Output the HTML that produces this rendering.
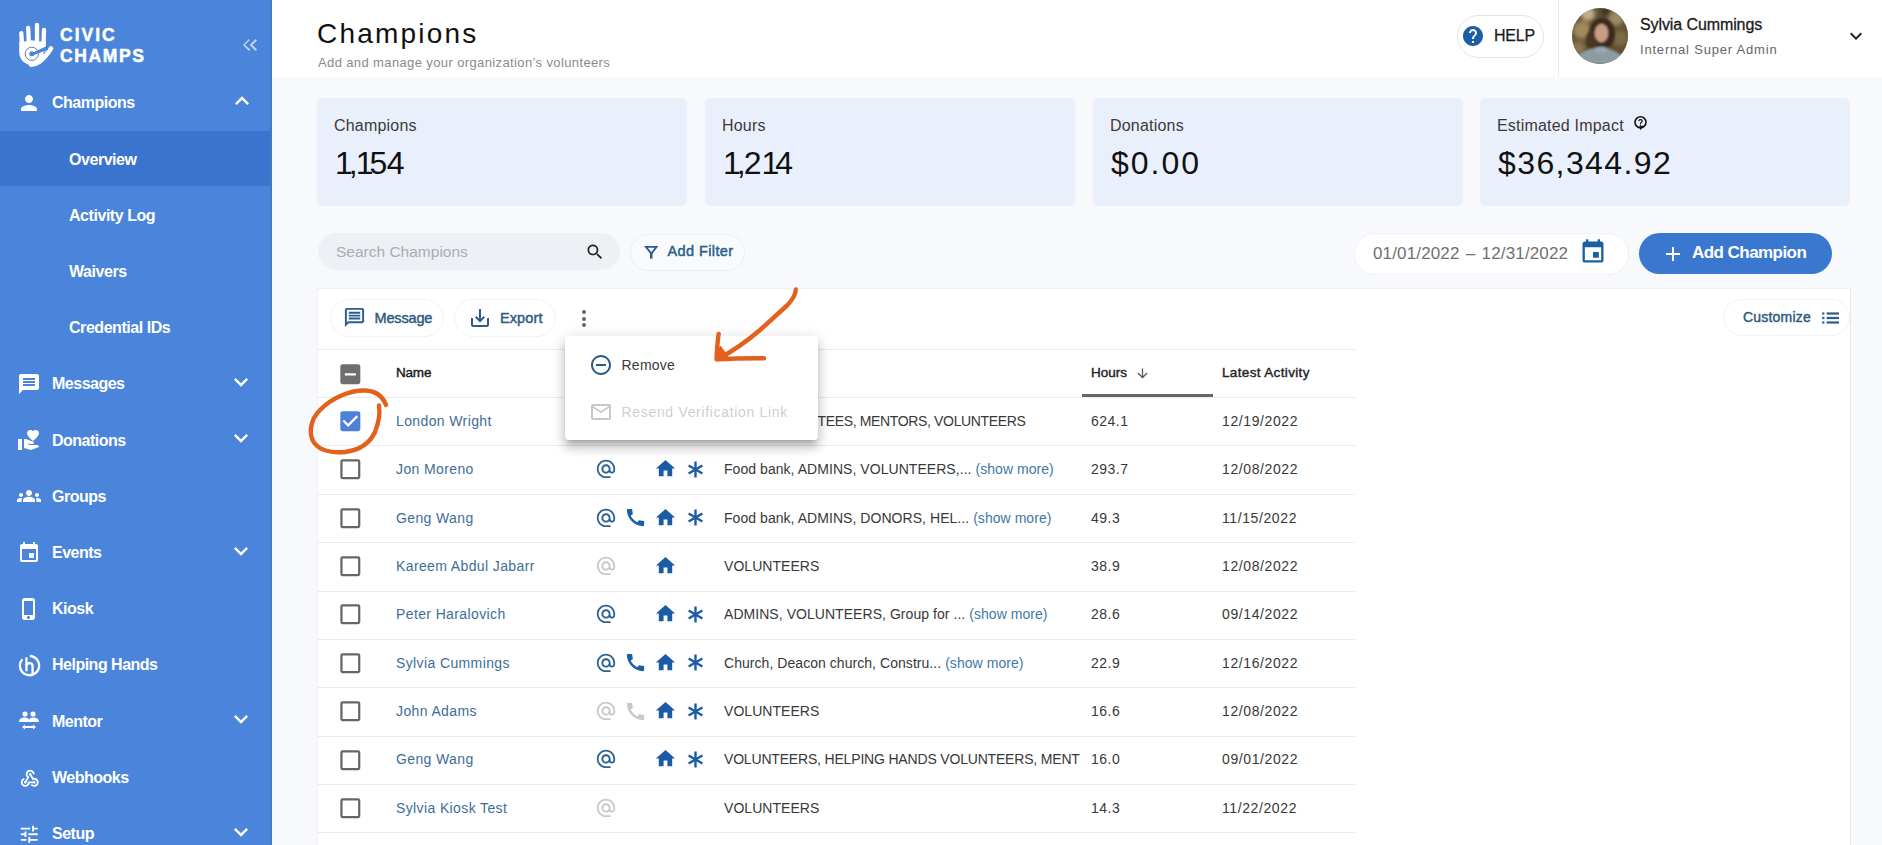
<!DOCTYPE html>
<html><head><meta charset="utf-8"><title>Champions</title><style>
*{margin:0;padding:0;box-sizing:border-box}
html,body{width:1882px;height:845px;overflow:hidden;background:#F7F9FC;font-family:"Liberation Sans", sans-serif}
.t{position:absolute;white-space:nowrap;line-height:1}
.ic{position:absolute;display:block}
.bx{position:absolute}
</style></head>
<body>
<div class="bx" style="left:0;top:0;width:272px;height:845px;background:#4A85DB"></div>
<div class="bx" style="left:270px;top:0;width:2px;height:845px;background:#4478C4"></div>
<div class="bx" style="left:0;top:131px;width:270px;height:55px;background:#3A74CE"></div>
<svg class="ic" style="left:0;top:0;width:60px;height:70px" viewBox="0 0 60 70">
<g fill="none" stroke="#fff" stroke-linecap="round">
<path d="M21.3 33.2 L22.3 50" stroke-width="4.3"/>
<path d="M28.2 27.8 L28.9 44" stroke-width="4.3"/>
<path d="M37 25 L37 43" stroke-width="4.3"/>
<path d="M44 30 L43.5 45" stroke-width="4.3"/>
<path d="M51 48.5 Q45 58 39 62 Q35 64.6 31 64.6" stroke-width="4.6"/>
</g>
<g fill="#fff"><rect x="19.3" y="41.5" width="26.5" height="10"/><ellipse cx="31.5" cy="52.5" rx="12.2" ry="12.3"/></g>
<circle cx="31.8" cy="53.8" r="6.6" fill="none" stroke="#2F5FA8" stroke-width="0.8"/>
<path d="M33.2 52.4 L46.3 46.2 L48.6 49.6 L33.2 55.3 Z" fill="#4A85DB"/>
<circle cx="31.8" cy="53.8" r="2.5" fill="#4A85DB"/>
</svg>
<div class="t" style="left:60px;top:26.99px;font-size:17.5px;color:#fff;font-weight:700;letter-spacing:2.0px;-webkit-text-stroke:0.5px #fff">CIVIC</div>
<div class="t" style="left:60px;top:47.99px;font-size:17.5px;color:#fff;font-weight:700;letter-spacing:1.6px;-webkit-text-stroke:0.5px #fff">CHAMPS</div>
<svg class="ic" style="left:238px;top:33px;width:24px;height:24px;" viewBox="0 0 24 24"><path fill="#C2D5F3" d="M17.59 18L19 16.59 14.42 12 19 7.41 17.59 6l-6 6z M11 18l1.41-1.41L6.83 12l4.58-4.59L11 6l-6 6z"/></svg>
<div class="t" style="left:52px;top:95.46px;font-size:16px;color:#fff;font-weight:700;letter-spacing:-0.5px;">Champions</div>
<svg class="ic" style="left:17px;top:91.0px;width:24px;height:24px;" viewBox="0 0 24 24"><path fill="#fff" d="M12 12c2.21 0 4-1.79 4-4s-1.79-4-4-4-4 1.79-4 4 1.79 4 4 4zm0 2c-2.67 0-8 1.34-8 4v2h16v-2c0-2.66-5.33-4-8-4z"/></svg>
<svg class="ic" style="left:227.5px;top:86.64999999999999px;width:28px;height:28px;" viewBox="0 0 24 24"><path fill="#fff" d="M12 8l-6 6 1.41 1.41L12 10.83l4.59 4.58L18 14z"/></svg>
<div class="t" style="left:69px;top:151.66px;font-size:16px;color:#fff;font-weight:700;letter-spacing:-0.45px;">Overview</div>
<div class="t" style="left:69px;top:207.86px;font-size:16px;color:#fff;font-weight:700;letter-spacing:-0.45px;">Activity Log</div>
<div class="t" style="left:69px;top:264.06px;font-size:16px;color:#fff;font-weight:700;letter-spacing:-0.45px;">Waivers</div>
<div class="t" style="left:69px;top:320.26px;font-size:16px;color:#fff;font-weight:700;letter-spacing:-0.45px;">Credential IDs</div>
<div class="t" style="left:52px;top:376.46px;font-size:16px;color:#fff;font-weight:700;letter-spacing:-0.5px;">Messages</div>
<svg class="ic" style="left:17px;top:372.0px;width:24px;height:24px;" viewBox="0 0 24 24"><path fill="#fff" d="M20 2H4c-1.1 0-1.99.9-1.99 2L2 22l4-4h14c1.1 0 2-.9 2-2V4c0-1.1-.9-2-2-2zM18 14H6v-2h12v2zm0-3H6V9h12v2zm0-3H6V6h12v2z"/></svg>
<svg class="ic" style="left:227.3px;top:368.25px;width:28px;height:28px;" viewBox="0 0 24 24"><path fill="#fff" d="M16.59 8.59L12 13.17 7.41 8.59 6 10l6 6 6-6z"/></svg>
<div class="t" style="left:52px;top:432.66px;font-size:16px;color:#fff;font-weight:700;letter-spacing:-0.5px;">Donations</div>
<svg class="ic" style="left:17px;top:428.20000000000005px;width:24px;height:24px;" viewBox="0 0 24 24"><path fill="#fff" d="M1 11h4v11H1zm15-7.75C16.65 2.49 17.66 2 18.7 2 20.55 2 22 3.45 22 5.3c0 2.27-2.91 4.9-6 7.7-3.09-2.81-6-5.44-6-7.7C10 3.45 11.45 2 13.3 2c1.04 0 2.05.49 2.7 1.25zM20 17h-7l-2.09-.73.33-.94L13 16h2.82c.65 0 1.18-.53 1.18-1.18 0-.49-.31-.93-.77-1.11L8.97 11H7v9.02L14 22l8-3c-.01-1.1-.89-2-2-2z"/></svg>
<svg class="ic" style="left:227.3px;top:424.45000000000005px;width:28px;height:28px;" viewBox="0 0 24 24"><path fill="#fff" d="M16.59 8.59L12 13.17 7.41 8.59 6 10l6 6 6-6z"/></svg>
<div class="t" style="left:52px;top:488.86px;font-size:16px;color:#fff;font-weight:700;letter-spacing:-0.5px;">Groups</div>
<svg class="ic" style="left:17px;top:484.40000000000003px;width:24px;height:24px;" viewBox="0 0 24 24"><path fill="#fff" d="M12 12.75c1.63 0 3.07.39 4.24.9 1.08.48 1.76 1.56 1.76 2.73V18H6v-1.61c0-1.18.68-2.26 1.76-2.73 1.17-.52 2.61-.91 4.24-.91zM4 13c1.1 0 2-.9 2-2s-.9-2-2-2-2 .9-2 2 .9 2 2 2zm1.13 1.1c-.37-.06-.74-.1-1.13-.1-.99 0-1.93.21-2.78.58C.48 14.9 0 15.62 0 16.430V18h4.5v-1.61c0-.83.23-1.610.63-2.29zM20 13c1.1 0 2-.9 2-2s-.9-2-2-2-2 .9-2 2 .9 2 2 2zm4 3.43c0-.81-.48-1.53-1.22-1.85-.85-.37-1.79-.58-2.78-.58-.39 0-.76.04-1.13.1.4.68.63 1.46.63 2.29V18H24v-1.57zM12 6c1.66 0 3 1.34 3 3s-1.34 3-3 3-3-1.34-3-3 1.34-3 3-3z"/></svg>
<div class="t" style="left:52px;top:545.06px;font-size:16px;color:#fff;font-weight:700;letter-spacing:-0.5px;">Events</div>
<svg class="ic" style="left:17px;top:540.6px;width:24px;height:24px;" viewBox="0 0 24 24"><path fill="#fff" d="M17 12h-5v5h5v-5zM16 1v2H8V1H6v2H5c-1.11 0-1.99.9-1.99 2L3 19c0 1.1.89 2 2 2h14c1.1 0 2-.9 2-2V5c0-1.1-.9-2-2-2h-1V1h-2zm3 18H5V8h14v11z"/></svg>
<svg class="ic" style="left:227.3px;top:536.85px;width:28px;height:28px;" viewBox="0 0 24 24"><path fill="#fff" d="M16.59 8.59L12 13.17 7.41 8.59 6 10l6 6 6-6z"/></svg>
<div class="t" style="left:52px;top:601.26px;font-size:16px;color:#fff;font-weight:700;letter-spacing:-0.5px;">Kiosk</div>
<svg class="ic" style="left:17px;top:596.8px;width:24px;height:24px;" viewBox="0 0 24 24"><path fill="#fff" d="M15.5 1h-8C6.12 1 5 2.12 5 3.5v17C5 21.88 6.12 23 7.5 23h8c1.38 0 2.5-1.12 2.5-2.5v-17C18 2.12 16.88 1 15.5 1zm-4 21c-.83 0-1.5-.67-1.5-1.5s.67-1.5 1.5-1.5 1.5.67 1.5 1.5-.67 1.5-1.5 1.5zm4.5-4H7V4h9v14z"/></svg>
<div class="t" style="left:52px;top:657.46px;font-size:16px;color:#fff;font-weight:700;letter-spacing:-0.5px;">Helping Hands</div>
<svg class="ic" style="left:17.5px;top:653.5px;width:23px;height:23px" viewBox="0 0 24 24"><g fill="none" stroke="#fff" stroke-width="2.4" stroke-linecap="butt"><path d="M12.3 2.1 A10 10 0 1 1 4.6 5.4"/><path d="M8.8 3.5 V18"/><path d="M8.8 12.5 C8.8 8.6 15.2 8.6 15.2 12.5 V21.2"/></g></svg>
<div class="t" style="left:52px;top:713.66px;font-size:16px;color:#fff;font-weight:700;letter-spacing:-0.5px;">Mentor</div>
<svg class="ic" style="left:17px;top:709.2px;width:24px;height:24px" viewBox="0 0 24 24"><g fill="#fff"><circle cx="8" cy="5" r="2.6"/><circle cx="16" cy="5" r="2.6"/><path d="M2 13 C2 9 6 8.5 8 8.5 C10 8.5 12 9.5 12 11 C12 9.5 14 8.5 16 8.5 C18 8.5 22 9 22 13 Z"/><path d="M5 18 L8 15.5 V17 H16 V15.5 L19 18 L16 20.5 V19 H8 V20.5 Z"/></g></svg>
<svg class="ic" style="left:227.3px;top:705.45px;width:28px;height:28px;" viewBox="0 0 24 24"><path fill="#fff" d="M16.59 8.59L12 13.17 7.41 8.59 6 10l6 6 6-6z"/></svg>
<div class="t" style="left:52px;top:769.86px;font-size:16px;color:#fff;font-weight:700;letter-spacing:-0.5px;">Webhooks</div>
<svg class="ic" style="left:18.5px;top:767.9000000000001px;width:21.5px;height:21.5px;" viewBox="0 0 24 24"><path fill="#fff" d="M10 15h5.88c.27-.31.67-.5 1.12-.5.83 0 1.5.67 1.5 1.5s-.67 1.5-1.5 1.5c-.44 0-.84-.19-1.120-.5H11.9c-.46 2.28-2.48 4-4.9 4-2.76 0-5-2.24-5-5 0-2.42 1.72-4.44 4-4.9v2.07c-1.16.41-2 1.53-2 2.830 0 1.65 1.35 3 3 3s3-1.35 3-3v-1zm2.5-11c1.65 0 3 1.35 3 3h2c0-2.76-2.24-5-5-5s-5 2.24-5 5c0 1.43.6 2.71 1.55 3.62l-2.35 3.9c-.68.14-1.2.75-1.2 1.48 0 .83.67 1.5 1.5 1.5s1.5-.67 1.5-1.5c0-.16-.02-.31-.07-.45l3.38-5.63C10.49 9.61 9.5 8.42 9.5 7c0-1.65 1.35-3 3-3zm4.5 9c-.64 0-1.23.2-1.72.54l-3.05-5.07C11.53 8.35 11 7.74 11 7c0-.83.67-1.5 1.5-1.5S14 6.17 14 7c0 .15-.02.29-.06.43l2.19 3.65c.28-.05.57-.08.87-.08 2.76 0 5 2.24 5 5s-2.24 5-5 5c-1.85 0-3.47-1.01-4.33-2.5h2.67c.48.32 1.05.5 1.66.5 1.65 0 3-1.35 3-3s-1.35-3-3-3z"/></svg>
<div class="t" style="left:52px;top:826.06px;font-size:16px;color:#fff;font-weight:700;letter-spacing:-0.5px;">Setup</div>
<svg class="ic" style="left:18px;top:822.8000000000001px;width:22.5px;height:22.5px;" viewBox="0 0 24 24"><path fill="#fff" d="M3 17v2h6v-2H3zM3 5v2h10V5H3zm10 16v-2h8v-2h-8v-2h-2v6h2zM7 9v2H3v2h4v2h2V9H7zm14 4v-2H11v2h10zm-6-4h2V7h4V5h-4V3h-2v6z"/></svg>
<svg class="ic" style="left:227.3px;top:817.85px;width:28px;height:28px;" viewBox="0 0 24 24"><path fill="#fff" d="M16.59 8.59L12 13.17 7.41 8.59 6 10l6 6 6-6z"/></svg>
<div class="bx" style="left:272px;top:0;width:1610px;height:77px;background:#fff"></div>
<div class="t" style="left:317px;top:19.80px;font-size:28px;color:#111;font-weight:400;letter-spacing:2.2px;">Champions</div>
<div class="t" style="left:318px;top:56.00px;font-size:13px;color:#8A8A8A;font-weight:400;letter-spacing:0.38px;">Add and manage your organization&rsquo;s volunteers</div>
<div class="bx" style="left:1457px;top:15px;width:87px;height:43px;border:1px solid #E3E3E3;border-radius:22px;background:#fff"></div>
<svg class="ic" style="left:1461px;top:24px;width:24px;height:24px;" viewBox="0 0 24 24"><path fill="#1B5FA5" d="M12 2C6.48 2 2 6.48 2 12s4.48 10 10 10 10-4.48 10-10S17.52 2 12 2zm1 17h-2v-2h2v2zm2.07-7.75l-.9.92C13.45 12.9 13 13.5 13 15h-2v-.5c0-1.1.45-2.1 1.17-2.83l1.24-1.26c.37-.36.59-.86.59-1.41 0-1.1-.9-2-2-2s-2 .9-2 2H8c0-2.21 1.79-4 4-4s4 1.79 4 4c0 .88-.36 1.68-.93 2.25z"/></svg>
<div class="t" style="left:1494px;top:27.66px;font-size:16px;color:#1a1a1a;font-weight:400;letter-spacing:-0.2px;-webkit-text-stroke:0.25px #1a1a1a">HELP</div>
<div class="bx" style="left:1558px;top:0;width:1px;height:77px;background:#EDEDED"></div>
<svg class="ic" style="left:1572px;top:8px;width:56px;height:56px" viewBox="0 0 56 56">
<defs><clipPath id="cp"><circle cx="28" cy="28" r="28"/></clipPath>
<filter id="bl" x="-20%" y="-20%" width="140%" height="140%"><feGaussianBlur stdDeviation="2.2"/></filter>
<filter id="bl2"><feGaussianBlur stdDeviation="0.8"/></filter></defs>
<g clip-path="url(#cp)">
<rect width="56" height="56" fill="#5f5034"/>
<g filter="url(#bl)">
<circle cx="10" cy="22" r="9" fill="#a08a5c"/>
<circle cx="16" cy="6" r="7" fill="#c2b08a"/>
<circle cx="44" cy="10" r="8" fill="#9c8a62"/>
<circle cx="48" cy="30" r="8" fill="#7d6a44"/>
<circle cx="6" cy="40" r="7" fill="#8a7650"/>
<circle cx="34" cy="4" r="5" fill="#3f3524"/>
</g>
<g filter="url(#bl2)">
<ellipse cx="30" cy="26" rx="13" ry="16" fill="#3a2a1c"/>
<ellipse cx="20" cy="32" rx="6" ry="10" fill="#4a3624"/>
<ellipse cx="29.5" cy="25" rx="6.8" ry="9.2" fill="#c79d84"/>
<path d="M0 56 C4 46 14 40 28 40 C42 40 50 46 56 56 Z" fill="#8c9ba4"/>
<path d="M22 41 C25 38 33 38 36 41 L34 45 L24 45 Z" fill="#9aa8b0"/>
</g>
</g></svg>
<div class="t" style="left:1640px;top:16.96px;font-size:16px;color:#1a1a1a;font-weight:400;letter-spacing:-0.1px;-webkit-text-stroke:0.3px #1a1a1a">Sylvia Cummings</div>
<div class="t" style="left:1640px;top:42.50px;font-size:13px;color:#666;font-weight:400;letter-spacing:0.8px;">Internal Super Admin</div>
<svg class="ic" style="left:1844px;top:24px;width:24px;height:24px;" viewBox="0 0 24 24"><path fill="#222" d="M16.59 8.59L12 13.17 7.41 8.59 6 10l6 6 6-6z"/></svg>
<div class="bx" style="left:317px;top:98px;width:370px;height:108px;background:#EAF0FB;border-radius:5px"></div>
<div class="t" style="left:334px;top:117.96px;font-size:16px;color:#3a3a3a;font-weight:400;letter-spacing:0.2px;">Champions</div>
<div class="t" style="left:335px;top:147.41px;font-size:32px;color:#111;font-weight:400;letter-spacing:0px;"><span style="letter-spacing:-4px">1</span><span style="letter-spacing:-2px">,</span><span style="letter-spacing:-4px">1</span><span style="letter-spacing:-0.5px">5</span>4</div>
<div class="bx" style="left:705px;top:98px;width:370px;height:108px;background:#EAF0FB;border-radius:5px"></div>
<div class="t" style="left:722px;top:117.96px;font-size:16px;color:#3a3a3a;font-weight:400;letter-spacing:0.2px;">Hours</div>
<div class="t" style="left:723px;top:147.41px;font-size:32px;color:#111;font-weight:400;letter-spacing:0px;"><span style="letter-spacing:-4px">1</span><span style="letter-spacing:-2px">,</span>2<span style="letter-spacing:-4px">1</span>4</div>
<div class="bx" style="left:1093px;top:98px;width:370px;height:108px;background:#EAF0FB;border-radius:5px"></div>
<div class="t" style="left:1110px;top:117.96px;font-size:16px;color:#3a3a3a;font-weight:400;letter-spacing:0.2px;">Donations</div>
<div class="t" style="left:1111px;top:147.41px;font-size:32px;color:#111;font-weight:400;letter-spacing:2.0px;">$0.00</div>
<div class="bx" style="left:1480px;top:98px;width:370px;height:108px;background:#EAF0FB;border-radius:5px"></div>
<div class="t" style="left:1497px;top:117.96px;font-size:16px;color:#3a3a3a;font-weight:400;letter-spacing:0.2px;">Estimated Impact</div>
<div class="t" style="left:1498px;top:147.41px;font-size:32px;color:#111;font-weight:400;letter-spacing:1.4px;">$36,344.92</div>
<svg class="ic" style="left:1632px;top:114px;width:17px;height:17px" viewBox="0 0 17 17"><circle cx="8.5" cy="8.3" r="5.5" fill="none" stroke="#111" stroke-width="1.6"/><path d="M7.2 12.6 L11.8 11.6 L8.2 16.2 Z" fill="#111"/><path d="M6.7 6.9 C6.7 5.2 10.3 5.2 10.3 6.9 C10.3 8.1 8.5 8.2 8.5 9.9" fill="none" stroke="#111" stroke-width="1.2"/><circle cx="8.5" cy="11.2" r="0.75" fill="#111"/></svg>
<div class="bx" style="left:318px;top:233px;width:302px;height:37px;background:#EDF1F5;border-radius:19px"></div>
<div class="t" style="left:336px;top:243.88px;font-size:15.5px;color:#A9ADB2;font-weight:400;letter-spacing:0px;">Search Champions</div>
<svg class="ic" style="left:585px;top:242px;width:20px;height:20px;" viewBox="0 0 24 24"><path fill="#222" d="M15.5 14h-.79l-.28-.27C15.41 12.59 16 11.11 16 9.5 16 5.91 13.09 3 9.5 3S3 5.91 3 9.5 5.91 16 9.5 16c1.61 0 3.09-.59 4.23-1.57l.27.28v.79l5 4.99L20.49 19l-4.99-5zm-6 0C7.01 14 5 11.990 5 9.5S7.01 5 9.5 5 14 7.01 14 9.5 11.99 14 9.5 14z"/></svg>
<div class="bx" style="left:630px;top:234px;width:115px;height:37px;border:1px solid #ECEEF0;border-radius:19px;background:#F9FAFC"></div>
<svg class="ic" style="left:644px;top:245px;width:15px;height:15px" viewBox="0 0 15 15"><path d="M1.9 1.9 H12.6 L7.25 8.6 Z" fill="none" stroke="#2B5C8A" stroke-width="1.8" stroke-linejoin="miter"/><rect x="6.0" y="8" width="2.5" height="5.6" fill="#2B5C8A"/></svg>
<div class="t" style="left:667.5px;top:244.23px;font-size:14.5px;color:#2B5C8A;font-weight:400;letter-spacing:0.4px;-webkit-text-stroke:0.45px #2B5C8A">Add Filter</div>
<div class="bx" style="left:1354px;top:233px;width:275px;height:42px;border:1px solid #F0F1F3;border-radius:21px;background:#fff"></div>
<div class="t" style="left:1373px;top:245.11px;font-size:17px;color:#707070;font-weight:400;letter-spacing:0.15px;">01/01/2022<span style="display:inline-block;width:22px;text-align:center">&ndash;</span>12/31/2022</div>
<svg class="ic" style="left:1578.5px;top:237.5px;width:28px;height:28px;" viewBox="0 0 24 24"><path fill="#1B5FA5" d="M17 12h-5v5h5v-5zM16 1v2H8V1H6v2H5c-1.11 0-1.99.9-1.99 2L3 19c0 1.1.89 2 2 2h14c1.1 0 2-.9 2-2V5c0-1.1-.9-2-2-2h-1V1h-2zm3 18H5V8h14v11z"/></svg>
<div class="bx" style="left:1639px;top:233px;width:193px;height:41px;background:#3A78D0;border-radius:21px"></div>
<svg class="ic" style="left:1661px;top:242px;width:24px;height:24px;" viewBox="0 0 24 24"><path fill="#fff" d="M19 13h-6v6h-2v-6H5v-2h6V5h2v6h6v2z"/></svg>
<div class="t" style="left:1692px;top:244.31px;font-size:17px;color:#fff;font-weight:700;letter-spacing:-0.55px;">Add Champion</div>
<div class="bx" style="left:317px;top:288px;width:1534px;height:600px;background:#fff;border:1px solid #EEF0F2;border-right-color:#E6E7E9;border-bottom:none"></div>
<div class="bx" style="left:330px;top:299px;width:114px;height:38px;border:1px solid #F1F2F3;border-radius:19px"></div>
<svg class="ic" style="left:343px;top:306px;width:23px;height:23px" viewBox="0 0 24 24"><path fill="#2B5C8A" d="M20 2H4c-1.1 0-2 .9-2 2v18l4-4h14c1.1 0 2-.9 2-2V4c0-1.1-.9-2-2-2zm0 14H5.17L4 17.17V4h16v12zM6 12h12v2H6zm0-3h12v2H6zm0-3h12v2H6z"/></svg>
<div class="t" style="left:374.5px;top:310.73px;font-size:14.5px;color:#2E5B82;font-weight:400;letter-spacing:-0.15px;-webkit-text-stroke:0.45px #2E5B82">Message</div>
<div class="bx" style="left:454px;top:299px;width:102px;height:38px;border:1px solid #F1F2F3;border-radius:19px"></div>
<svg class="ic" style="left:468px;top:306px;width:24px;height:24px;" viewBox="0 0 24 24"><path fill="#2B5C8A" d="M19 12v7H5v-7H3v7c0 1.1.9 2 2 2h14c1.1 0 2-.9 2-2v-7h-2zm-6 .67l2.59-2.58L17 11.5l-5 5-5-5 1.41-1.41L11 12.67V3h2z"/></svg>
<div class="t" style="left:500px;top:310.73px;font-size:14.5px;color:#2E5B82;font-weight:400;letter-spacing:0.1px;-webkit-text-stroke:0.45px #2E5B82">Export</div>
<div class="bx" style="left:581.5px;top:310px;width:4px;height:4px;border-radius:2px;background:#666"></div>
<div class="bx" style="left:581.5px;top:316.5px;width:4px;height:4px;border-radius:2px;background:#666"></div>
<div class="bx" style="left:581.5px;top:323px;width:4px;height:4px;border-radius:2px;background:#666"></div>
<div class="bx" style="left:1723px;top:299px;width:127px;height:37px;border:1px solid #F1F2F3;border-radius:19px"></div>
<div class="t" style="left:1743px;top:310.45px;font-size:14px;color:#2E5B82;font-weight:400;letter-spacing:0.2px;-webkit-text-stroke:0.45px #2E5B82">Customize</div>
<svg class="ic" style="left:1820px;top:310px;width:22px;height:16px" viewBox="0 0 22 16"><g fill="#2B5C8A"><rect x="2.2" y="2.4" width="2.2" height="2.2"/><rect x="2.2" y="6.9" width="2.2" height="2.2"/><rect x="2.2" y="11.4" width="2.2" height="2.2"/><rect x="6.6" y="2.4" width="12.4" height="2.2"/><rect x="6.6" y="6.9" width="12.4" height="2.2"/><rect x="6.6" y="11.4" width="12.4" height="2.2"/></g></svg>
<div class="bx" style="left:318px;top:349px;width:1037px;height:1px;background:#EBEBEB"></div>
<svg class="ic" style="left:336.7px;top:360.7px;width:26.67px;height:26.67px;" viewBox="0 0 24 24"><path fill="#6E6E6E" d="M19 3H5c-1.1 0-2 .9-2 2v14c0 1.1.9 2 2 2h14c1.1 0 2-.9 2-2V5c0-1.1-.9-2-2-2zm-2 10H7v-2h10v2z"/></svg>
<div class="t" style="left:396px;top:366.17px;font-size:13.5px;color:#1a1a1a;font-weight:400;letter-spacing:-0.2px;-webkit-text-stroke:0.4px #1a1a1a">Name</div>
<div class="t" style="left:1091px;top:366.17px;font-size:13.5px;color:#222;font-weight:400;letter-spacing:0px;-webkit-text-stroke:0.4px #222">Hours</div>
<svg class="ic" style="left:1134.5px;top:365.5px;width:15px;height:15px;" viewBox="0 0 24 24"><path fill="#555" d="M20 12l-1.41-1.41L13 16.17V4h-2v12.17l-5.58-5.59L4 12l8 8 8-8z"/></svg>
<div class="t" style="left:1222px;top:366.17px;font-size:13.5px;color:#222;font-weight:400;letter-spacing:0.35px;-webkit-text-stroke:0.4px #222">Latest Activity</div>
<div class="bx" style="left:318px;top:397px;width:1037px;height:1px;background:#EBEBEB"></div>
<div class="bx" style="left:1082px;top:394px;width:131px;height:3px;background:#666"></div>
<svg class="ic" style="left:336.7px;top:407.967px;width:26.67px;height:26.67px;" viewBox="0 0 24 24"><path fill="#4D80DB" d="M19 3H5c-1.11 0-2 .9-2 2v14c0 1.1.89 2 2 2h14c1.11 0 2-.9 2-2V5c0-1.1-.89-2-2-2zm-9 14l-5-5 1.41-1.41L10 14.17l7.59-7.59L19 8l-9 9z"/></svg>
<div class="t" style="left:396px;top:413.85px;font-size:14px;color:#3D6E98;font-weight:400;letter-spacing:0.38px;">London Wright</div>
<div class="t" style="left:817.5px;top:413.85px;font-size:14px;color:#383838;font-weight:400;letter-spacing:-0.35px;">TEES, MENTORS, VOLUNTEERS</div>
<div class="t" style="left:1091px;top:413.85px;font-size:14px;color:#383838;font-weight:400;letter-spacing:0.5px;">624.1</div>
<div class="t" style="left:1222px;top:413.85px;font-size:14px;color:#383838;font-weight:400;letter-spacing:0.6px;">12/19/2022</div>
<div class="bx" style="left:318px;top:445.4px;width:1037px;height:1px;background:#EBEBEB"></div>
<svg class="ic" style="left:336.7px;top:456.342px;width:26.67px;height:26.67px;" viewBox="0 0 24 24"><path fill="#666" d="M19 5v14H5V5h14m0-2H5c-1.1 0-2 .9-2 2v14c0 1.1.9 2 2 2h14c1.1 0 2-.9 2-2V5c0-1.1-.9-2-2-2z"/></svg>
<div class="t" style="left:396px;top:462.22px;font-size:14px;color:#3D6E98;font-weight:400;letter-spacing:0.38px;">Jon Moreno</div>
<svg class="ic" style="left:594.5px;top:458.175px;width:22px;height:22px;" viewBox="0 0 24 24"><path fill="#2F6393" d="M12 1.95c-5.52 0-10 4.48-10 10s4.48 10 10 10h5v-2h-5c-4.34 0-8-3.66-8-8s3.66-8 8-8 8 3.66 8 8v1.43c0 .79-.71 1.57-1.5 1.57s-1.5-.78-1.5-1.57v-1.43c0-2.76-2.24-5-5-5s-5 2.24-5 5 2.24 5 5 5c1.38 0 2.64-.56 3.54-1.47.65.89 1.77 1.47 2.96 1.470 1.97 0 3.5-1.6 3.5-3.57v-1.43c0-5.52-4.48-10-10-10zm0 13c-1.66 0-3-1.34-3-3s1.34-3 3-3 3 1.34 3 3-1.34 3-3 3z"/></svg>
<svg class="ic" style="left:654.0px;top:457.175px;width:23px;height:23px;" viewBox="0 0 24 24"><path fill="#1A5BA8" d="M10 20v-6h4v6h5v-8h3L12 3 2 12h3v8z"/></svg>
<svg class="ic" style="left:687.0px;top:460.675px;width:17px;height:17px" viewBox="0 0 17 17"><g stroke="#1A5BA8" stroke-width="2.4" stroke-linecap="butt"><path d="M8.5 0.5 V16.5"/><path d="M1.6 4.5 L15.4 12.5"/><path d="M1.6 12.5 L15.4 4.5"/></g></svg>
<div class="t" style="left:724px;top:462.22px;font-size:14px;color:#383838;font-weight:400;letter-spacing:0.05px;">Food bank, ADMINS, VOLUNTEERS,... <span style="color:#4178A8">(show more)</span></div>
<div class="t" style="left:1091px;top:462.22px;font-size:14px;color:#383838;font-weight:400;letter-spacing:0.5px;">293.7</div>
<div class="t" style="left:1222px;top:462.22px;font-size:14px;color:#383838;font-weight:400;letter-spacing:0.6px;">12/08/2022</div>
<div class="bx" style="left:318px;top:493.8px;width:1037px;height:1px;background:#EBEBEB"></div>
<svg class="ic" style="left:336.7px;top:504.7169999999999px;width:26.67px;height:26.67px;" viewBox="0 0 24 24"><path fill="#666" d="M19 5v14H5V5h14m0-2H5c-1.1 0-2 .9-2 2v14c0 1.1.9 2 2 2h14c1.1 0 2-.9 2-2V5c0-1.1-.9-2-2-2z"/></svg>
<div class="t" style="left:396px;top:510.60px;font-size:14px;color:#3D6E98;font-weight:400;letter-spacing:0.38px;">Geng Wang</div>
<svg class="ic" style="left:594.5px;top:506.54999999999995px;width:22px;height:22px;" viewBox="0 0 24 24"><path fill="#2F6393" d="M12 1.95c-5.52 0-10 4.48-10 10s4.48 10 10 10h5v-2h-5c-4.34 0-8-3.66-8-8s3.66-8 8-8 8 3.66 8 8v1.43c0 .79-.71 1.57-1.5 1.57s-1.5-.78-1.5-1.57v-1.43c0-2.76-2.24-5-5-5s-5 2.24-5 5 2.24 5 5 5c1.38 0 2.64-.56 3.54-1.47.65.89 1.77 1.47 2.96 1.470 1.97 0 3.5-1.6 3.5-3.57v-1.43c0-5.52-4.48-10-10-10zm0 13c-1.66 0-3-1.34-3-3s1.34-3 3-3 3 1.34 3 3-1.34 3-3 3z"/></svg>
<svg class="ic" style="left:624.0px;top:506.04999999999995px;width:23px;height:23px;" viewBox="0 0 24 24"><path fill="#1B5FA5" d="M20.01 15.38c-1.23 0-2.42-.2-3.53-.56-.35-.12-.74-.03-1.01.24l-1.57 1.97c-2.83-1.35-5.48-3.9-6.89-6.83l1.95-1.66c.27-.28.35-.67.24-1.02-.37-1.11-.56-2.3-.56-3.53 0-.54-.45-.99-.99-.99H4.19C3.65 3 3 3.24 3 3.99 3 13.28 10.73 21 20.01 21c.71 0 .99-.63.99-1.18v-3.45c0-.54-.45-.99-.99-.99z"/></svg>
<svg class="ic" style="left:654.0px;top:505.54999999999995px;width:23px;height:23px;" viewBox="0 0 24 24"><path fill="#1A5BA8" d="M10 20v-6h4v6h5v-8h3L12 3 2 12h3v8z"/></svg>
<svg class="ic" style="left:687.0px;top:509.04999999999995px;width:17px;height:17px" viewBox="0 0 17 17"><g stroke="#1A5BA8" stroke-width="2.4" stroke-linecap="butt"><path d="M8.5 0.5 V16.5"/><path d="M1.6 4.5 L15.4 12.5"/><path d="M1.6 12.5 L15.4 4.5"/></g></svg>
<div class="t" style="left:724px;top:510.60px;font-size:14px;color:#383838;font-weight:400;letter-spacing:0.05px;">Food bank, ADMINS, DONORS, HEL... <span style="color:#4178A8">(show more)</span></div>
<div class="t" style="left:1091px;top:510.60px;font-size:14px;color:#383838;font-weight:400;letter-spacing:0.5px;">49.3</div>
<div class="t" style="left:1222px;top:510.60px;font-size:14px;color:#383838;font-weight:400;letter-spacing:0.6px;">11/15/2022</div>
<div class="bx" style="left:318px;top:542.1px;width:1037px;height:1px;background:#EBEBEB"></div>
<svg class="ic" style="left:336.7px;top:553.092px;width:26.67px;height:26.67px;" viewBox="0 0 24 24"><path fill="#666" d="M19 5v14H5V5h14m0-2H5c-1.1 0-2 .9-2 2v14c0 1.1.9 2 2 2h14c1.1 0 2-.9 2-2V5c0-1.1-.9-2-2-2z"/></svg>
<div class="t" style="left:396px;top:558.97px;font-size:14px;color:#3D6E98;font-weight:400;letter-spacing:0.38px;">Kareem Abdul Jabarr</div>
<svg class="ic" style="left:594.5px;top:554.925px;width:22px;height:22px;" viewBox="0 0 24 24"><path fill="#C9C9C9" d="M12 1.95c-5.52 0-10 4.48-10 10s4.48 10 10 10h5v-2h-5c-4.34 0-8-3.66-8-8s3.66-8 8-8 8 3.66 8 8v1.43c0 .79-.71 1.57-1.5 1.57s-1.5-.78-1.5-1.57v-1.43c0-2.76-2.24-5-5-5s-5 2.24-5 5 2.24 5 5 5c1.38 0 2.64-.56 3.54-1.47.65.89 1.77 1.47 2.96 1.470 1.97 0 3.5-1.6 3.5-3.57v-1.43c0-5.52-4.48-10-10-10zm0 13c-1.66 0-3-1.34-3-3s1.34-3 3-3 3 1.34 3 3-1.34 3-3 3z"/></svg>
<svg class="ic" style="left:654.0px;top:553.925px;width:23px;height:23px;" viewBox="0 0 24 24"><path fill="#1A5BA8" d="M10 20v-6h4v6h5v-8h3L12 3 2 12h3v8z"/></svg>
<div class="t" style="left:724px;top:558.97px;font-size:14px;color:#383838;font-weight:400;letter-spacing:0.05px;">VOLUNTEERS</div>
<div class="t" style="left:1091px;top:558.97px;font-size:14px;color:#383838;font-weight:400;letter-spacing:0.5px;">38.9</div>
<div class="t" style="left:1222px;top:558.97px;font-size:14px;color:#383838;font-weight:400;letter-spacing:0.6px;">12/08/2022</div>
<div class="bx" style="left:318px;top:590.5px;width:1037px;height:1px;background:#EBEBEB"></div>
<svg class="ic" style="left:336.7px;top:601.467px;width:26.67px;height:26.67px;" viewBox="0 0 24 24"><path fill="#666" d="M19 5v14H5V5h14m0-2H5c-1.1 0-2 .9-2 2v14c0 1.1.9 2 2 2h14c1.1 0 2-.9 2-2V5c0-1.1-.9-2-2-2z"/></svg>
<div class="t" style="left:396px;top:607.35px;font-size:14px;color:#3D6E98;font-weight:400;letter-spacing:0.38px;">Peter Haralovich</div>
<svg class="ic" style="left:594.5px;top:603.3px;width:22px;height:22px;" viewBox="0 0 24 24"><path fill="#2F6393" d="M12 1.95c-5.52 0-10 4.48-10 10s4.48 10 10 10h5v-2h-5c-4.34 0-8-3.66-8-8s3.66-8 8-8 8 3.66 8 8v1.43c0 .79-.71 1.57-1.5 1.57s-1.5-.78-1.5-1.57v-1.43c0-2.76-2.24-5-5-5s-5 2.24-5 5 2.24 5 5 5c1.38 0 2.64-.56 3.54-1.47.65.89 1.77 1.47 2.96 1.470 1.97 0 3.5-1.6 3.5-3.57v-1.43c0-5.52-4.48-10-10-10zm0 13c-1.66 0-3-1.34-3-3s1.34-3 3-3 3 1.34 3 3-1.34 3-3 3z"/></svg>
<svg class="ic" style="left:654.0px;top:602.3px;width:23px;height:23px;" viewBox="0 0 24 24"><path fill="#1A5BA8" d="M10 20v-6h4v6h5v-8h3L12 3 2 12h3v8z"/></svg>
<svg class="ic" style="left:687.0px;top:605.8px;width:17px;height:17px" viewBox="0 0 17 17"><g stroke="#1A5BA8" stroke-width="2.4" stroke-linecap="butt"><path d="M8.5 0.5 V16.5"/><path d="M1.6 4.5 L15.4 12.5"/><path d="M1.6 12.5 L15.4 4.5"/></g></svg>
<div class="t" style="left:724px;top:607.35px;font-size:14px;color:#383838;font-weight:400;letter-spacing:0.05px;">ADMINS, VOLUNTEERS, Group for ... <span style="color:#4178A8">(show more)</span></div>
<div class="t" style="left:1091px;top:607.35px;font-size:14px;color:#383838;font-weight:400;letter-spacing:0.5px;">28.6</div>
<div class="t" style="left:1222px;top:607.35px;font-size:14px;color:#383838;font-weight:400;letter-spacing:0.6px;">09/14/2022</div>
<div class="bx" style="left:318px;top:638.9px;width:1037px;height:1px;background:#EBEBEB"></div>
<svg class="ic" style="left:336.7px;top:649.842px;width:26.67px;height:26.67px;" viewBox="0 0 24 24"><path fill="#666" d="M19 5v14H5V5h14m0-2H5c-1.1 0-2 .9-2 2v14c0 1.1.9 2 2 2h14c1.1 0 2-.9 2-2V5c0-1.1-.9-2-2-2z"/></svg>
<div class="t" style="left:396px;top:655.72px;font-size:14px;color:#3D6E98;font-weight:400;letter-spacing:0.38px;">Sylvia Cummings</div>
<svg class="ic" style="left:594.5px;top:651.675px;width:22px;height:22px;" viewBox="0 0 24 24"><path fill="#2F6393" d="M12 1.95c-5.52 0-10 4.48-10 10s4.48 10 10 10h5v-2h-5c-4.34 0-8-3.66-8-8s3.66-8 8-8 8 3.66 8 8v1.43c0 .79-.71 1.57-1.5 1.57s-1.5-.78-1.5-1.57v-1.43c0-2.76-2.24-5-5-5s-5 2.24-5 5 2.24 5 5 5c1.38 0 2.64-.56 3.54-1.47.65.89 1.77 1.47 2.96 1.470 1.97 0 3.5-1.6 3.5-3.57v-1.43c0-5.52-4.48-10-10-10zm0 13c-1.66 0-3-1.34-3-3s1.34-3 3-3 3 1.34 3 3-1.34 3-3 3z"/></svg>
<svg class="ic" style="left:624.0px;top:651.175px;width:23px;height:23px;" viewBox="0 0 24 24"><path fill="#1B5FA5" d="M20.01 15.38c-1.23 0-2.42-.2-3.53-.56-.35-.12-.74-.03-1.01.24l-1.57 1.97c-2.83-1.35-5.48-3.9-6.89-6.83l1.95-1.66c.27-.28.35-.67.24-1.02-.37-1.11-.56-2.3-.56-3.53 0-.54-.45-.99-.99-.99H4.19C3.65 3 3 3.24 3 3.99 3 13.28 10.73 21 20.01 21c.71 0 .99-.63.99-1.18v-3.45c0-.54-.45-.99-.99-.99z"/></svg>
<svg class="ic" style="left:654.0px;top:650.675px;width:23px;height:23px;" viewBox="0 0 24 24"><path fill="#1A5BA8" d="M10 20v-6h4v6h5v-8h3L12 3 2 12h3v8z"/></svg>
<svg class="ic" style="left:687.0px;top:654.175px;width:17px;height:17px" viewBox="0 0 17 17"><g stroke="#1A5BA8" stroke-width="2.4" stroke-linecap="butt"><path d="M8.5 0.5 V16.5"/><path d="M1.6 4.5 L15.4 12.5"/><path d="M1.6 12.5 L15.4 4.5"/></g></svg>
<div class="t" style="left:724px;top:655.72px;font-size:14px;color:#383838;font-weight:400;letter-spacing:0.05px;">Church, Deacon church, Constru... <span style="color:#4178A8">(show more)</span></div>
<div class="t" style="left:1091px;top:655.72px;font-size:14px;color:#383838;font-weight:400;letter-spacing:0.5px;">22.9</div>
<div class="t" style="left:1222px;top:655.72px;font-size:14px;color:#383838;font-weight:400;letter-spacing:0.6px;">12/16/2022</div>
<div class="bx" style="left:318px;top:687.3px;width:1037px;height:1px;background:#EBEBEB"></div>
<svg class="ic" style="left:336.7px;top:698.217px;width:26.67px;height:26.67px;" viewBox="0 0 24 24"><path fill="#666" d="M19 5v14H5V5h14m0-2H5c-1.1 0-2 .9-2 2v14c0 1.1.9 2 2 2h14c1.1 0 2-.9 2-2V5c0-1.1-.9-2-2-2z"/></svg>
<div class="t" style="left:396px;top:704.10px;font-size:14px;color:#3D6E98;font-weight:400;letter-spacing:0.38px;">John Adams</div>
<svg class="ic" style="left:594.5px;top:700.05px;width:22px;height:22px;" viewBox="0 0 24 24"><path fill="#C9C9C9" d="M12 1.95c-5.52 0-10 4.48-10 10s4.48 10 10 10h5v-2h-5c-4.34 0-8-3.66-8-8s3.66-8 8-8 8 3.66 8 8v1.43c0 .79-.71 1.57-1.5 1.57s-1.5-.78-1.5-1.57v-1.43c0-2.76-2.24-5-5-5s-5 2.24-5 5 2.24 5 5 5c1.38 0 2.64-.56 3.54-1.47.65.89 1.77 1.47 2.96 1.470 1.97 0 3.5-1.6 3.5-3.57v-1.43c0-5.52-4.48-10-10-10zm0 13c-1.66 0-3-1.34-3-3s1.34-3 3-3 3 1.34 3 3-1.34 3-3 3z"/></svg>
<svg class="ic" style="left:624.0px;top:699.55px;width:23px;height:23px;" viewBox="0 0 24 24"><path fill="#C9C9C9" d="M20.01 15.38c-1.23 0-2.42-.2-3.53-.56-.35-.12-.74-.03-1.01.24l-1.57 1.97c-2.83-1.35-5.48-3.9-6.89-6.83l1.95-1.66c.27-.28.35-.67.24-1.02-.37-1.11-.56-2.3-.56-3.53 0-.54-.45-.99-.99-.99H4.19C3.65 3 3 3.24 3 3.99 3 13.28 10.73 21 20.01 21c.71 0 .99-.63.99-1.18v-3.45c0-.54-.45-.99-.99-.99z"/></svg>
<svg class="ic" style="left:654.0px;top:699.05px;width:23px;height:23px;" viewBox="0 0 24 24"><path fill="#1A5BA8" d="M10 20v-6h4v6h5v-8h3L12 3 2 12h3v8z"/></svg>
<svg class="ic" style="left:687.0px;top:702.55px;width:17px;height:17px" viewBox="0 0 17 17"><g stroke="#1A5BA8" stroke-width="2.4" stroke-linecap="butt"><path d="M8.5 0.5 V16.5"/><path d="M1.6 4.5 L15.4 12.5"/><path d="M1.6 12.5 L15.4 4.5"/></g></svg>
<div class="t" style="left:724px;top:704.10px;font-size:14px;color:#383838;font-weight:400;letter-spacing:0.05px;">VOLUNTEERS</div>
<div class="t" style="left:1091px;top:704.10px;font-size:14px;color:#383838;font-weight:400;letter-spacing:0.5px;">16.6</div>
<div class="t" style="left:1222px;top:704.10px;font-size:14px;color:#383838;font-weight:400;letter-spacing:0.6px;">12/08/2022</div>
<div class="bx" style="left:318px;top:735.6px;width:1037px;height:1px;background:#EBEBEB"></div>
<svg class="ic" style="left:336.7px;top:746.592px;width:26.67px;height:26.67px;" viewBox="0 0 24 24"><path fill="#666" d="M19 5v14H5V5h14m0-2H5c-1.1 0-2 .9-2 2v14c0 1.1.9 2 2 2h14c1.1 0 2-.9 2-2V5c0-1.1-.9-2-2-2z"/></svg>
<div class="t" style="left:396px;top:752.47px;font-size:14px;color:#3D6E98;font-weight:400;letter-spacing:0.38px;">Geng Wang</div>
<svg class="ic" style="left:594.5px;top:748.425px;width:22px;height:22px;" viewBox="0 0 24 24"><path fill="#2F6393" d="M12 1.95c-5.52 0-10 4.48-10 10s4.48 10 10 10h5v-2h-5c-4.34 0-8-3.66-8-8s3.66-8 8-8 8 3.66 8 8v1.43c0 .79-.71 1.57-1.5 1.57s-1.5-.78-1.5-1.57v-1.43c0-2.76-2.24-5-5-5s-5 2.24-5 5 2.24 5 5 5c1.38 0 2.64-.56 3.54-1.47.65.89 1.77 1.47 2.96 1.470 1.97 0 3.5-1.6 3.5-3.57v-1.43c0-5.52-4.48-10-10-10zm0 13c-1.66 0-3-1.34-3-3s1.34-3 3-3 3 1.34 3 3-1.34 3-3 3z"/></svg>
<svg class="ic" style="left:654.0px;top:747.425px;width:23px;height:23px;" viewBox="0 0 24 24"><path fill="#1A5BA8" d="M10 20v-6h4v6h5v-8h3L12 3 2 12h3v8z"/></svg>
<svg class="ic" style="left:687.0px;top:750.925px;width:17px;height:17px" viewBox="0 0 17 17"><g stroke="#1A5BA8" stroke-width="2.4" stroke-linecap="butt"><path d="M8.5 0.5 V16.5"/><path d="M1.6 4.5 L15.4 12.5"/><path d="M1.6 12.5 L15.4 4.5"/></g></svg>
<div class="t" style="left:724px;top:752.47px;font-size:14px;color:#383838;font-weight:400;letter-spacing:-0.18px;">VOLUNTEERS, HELPING HANDS VOLUNTEERS, MENT</div>
<div class="t" style="left:1091px;top:752.47px;font-size:14px;color:#383838;font-weight:400;letter-spacing:0.5px;">16.0</div>
<div class="t" style="left:1222px;top:752.47px;font-size:14px;color:#383838;font-weight:400;letter-spacing:0.6px;">09/01/2022</div>
<div class="bx" style="left:318px;top:784.0px;width:1037px;height:1px;background:#EBEBEB"></div>
<svg class="ic" style="left:336.7px;top:794.967px;width:26.67px;height:26.67px;" viewBox="0 0 24 24"><path fill="#666" d="M19 5v14H5V5h14m0-2H5c-1.1 0-2 .9-2 2v14c0 1.1.9 2 2 2h14c1.1 0 2-.9 2-2V5c0-1.1-.9-2-2-2z"/></svg>
<div class="t" style="left:396px;top:800.85px;font-size:14px;color:#3D6E98;font-weight:400;letter-spacing:0.38px;">Sylvia Kiosk Test</div>
<svg class="ic" style="left:594.5px;top:796.8px;width:22px;height:22px;" viewBox="0 0 24 24"><path fill="#C9C9C9" d="M12 1.95c-5.52 0-10 4.48-10 10s4.48 10 10 10h5v-2h-5c-4.34 0-8-3.66-8-8s3.66-8 8-8 8 3.66 8 8v1.43c0 .79-.71 1.57-1.5 1.57s-1.5-.78-1.5-1.57v-1.43c0-2.76-2.24-5-5-5s-5 2.24-5 5 2.24 5 5 5c1.38 0 2.64-.56 3.54-1.47.65.89 1.77 1.47 2.96 1.470 1.97 0 3.5-1.6 3.5-3.57v-1.43c0-5.52-4.48-10-10-10zm0 13c-1.66 0-3-1.34-3-3s1.34-3 3-3 3 1.34 3 3-1.34 3-3 3z"/></svg>
<div class="t" style="left:724px;top:800.85px;font-size:14px;color:#383838;font-weight:400;letter-spacing:0.05px;">VOLUNTEERS</div>
<div class="t" style="left:1091px;top:800.85px;font-size:14px;color:#383838;font-weight:400;letter-spacing:0.5px;">14.3</div>
<div class="t" style="left:1222px;top:800.85px;font-size:14px;color:#383838;font-weight:400;letter-spacing:0.6px;">11/22/2022</div>
<div class="bx" style="left:318px;top:832.4px;width:1037px;height:1px;background:#EBEBEB"></div>
<div class="bx" style="left:565px;top:336px;width:253px;height:104px;background:#fff;border-radius:4px;box-shadow:0 5px 5px -3px rgba(0,0,0,0.2),0 8px 10px 1px rgba(0,0,0,0.14),0 3px 14px 2px rgba(0,0,0,0.12)"></div>
<svg class="ic" style="left:589px;top:353px;width:24px;height:24px;" viewBox="0 0 24 24"><path fill="#2B5C8A" d="M7 11v2h10v-2H7zm5-9C6.48 2 2 6.48 2 12s4.48 10 10 10 10-4.48 10-10S17.52 2 12 2zm0 18c-4.41 0-8-3.59-8-8s3.590-8 8-8 8 3.59 8 8-3.59 8-8 8z"/></svg>
<div class="t" style="left:621.5px;top:358.35px;font-size:14px;color:#3a3a3a;font-weight:400;letter-spacing:0.25px;">Remove</div>
<svg class="ic" style="left:589px;top:400px;width:24px;height:24px;" viewBox="0 0 24 24"><path fill="#C8C8C8" d="M20 4H4c-1.1 0-1.99.9-1.99 2L2 18c0 1.1.9 2 2 2h16c1.1 0 2-.9 2-2V6c0-1.1-.9-2-2-2zm0 14H4V8l8 5 8-5v10zm-8-7L4 6h16l-8 5z"/></svg>
<div class="t" style="left:621.5px;top:405.15px;font-size:14px;color:#CFCFCF;font-weight:400;letter-spacing:0.68px;">Resend Verification Link</div>
<svg class="ic" style="left:0;top:0;width:1882px;height:845px" viewBox="0 0 1882 845"><g fill="none" stroke="#E2611C" stroke-width="4.4" stroke-linecap="round" stroke-linejoin="round">
<path d="M795.8 289.5 C795.5 296 792 300.5 787 305.5 L760 330 C745 343 731 352 718 359"/>
<path d="M718.6 334 C717.6 342 716.6 351 716.6 359.4 C730 358.6 748 358.2 764 358.3"/>
<path d="M716 358 L720.5 347 L727 356 Z" stroke-width="2" fill="#E2611C"/>
<path d="M386 405 C383 397 376 391 365 390.5 C350 390 332 398 320 410 C310 420 309 433 313 441 C318 450 330 453 345 452 C360 450 370 443 375 432 C379 422 380 412 379 405.5"/>
</g></svg>
</body></html>
